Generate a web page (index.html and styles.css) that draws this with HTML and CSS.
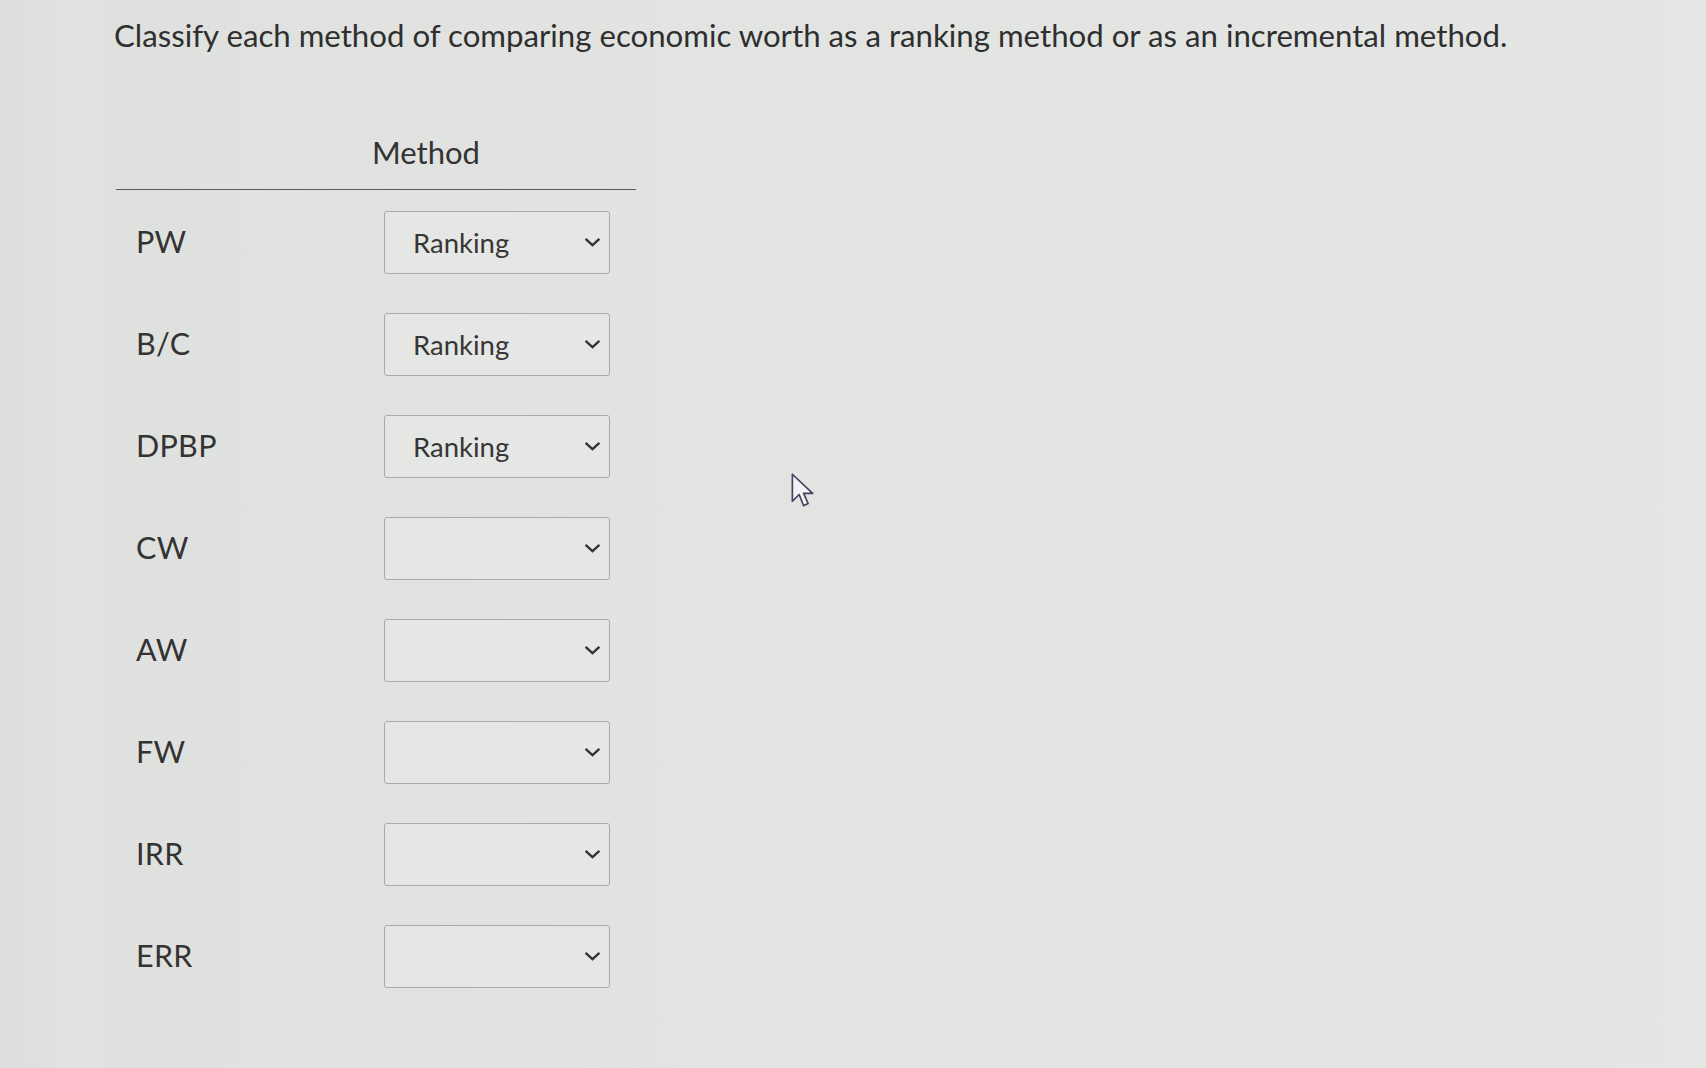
FILE: index.html
```html
<!DOCTYPE html>
<html>
<head>
<meta charset="utf-8">
<link rel="stylesheet" href="styles.css">
</head>
<body>
<div class="page">
  <h1 class="title">Classify each method of comparing economic worth as a ranking method or as an incremental method.</h1>
  <div class="table">
    <div class="head"><span class="head-label">Method</span></div>
    <div class="row"><span class="label">PW</span><div class="sel"><span class="val">Ranking</span><svg class="chev" viewBox="0 0 16 9"><path d="M1.5 1.5 L8 7.5 L14.5 1.5" fill="none" stroke="#333" stroke-width="2.2"/></svg></div></div>
    <div class="row"><span class="label">B/C</span><div class="sel"><span class="val">Ranking</span><svg class="chev" viewBox="0 0 16 9"><path d="M1.5 1.5 L8 7.5 L14.5 1.5" fill="none" stroke="#333" stroke-width="2.2"/></svg></div></div>
    <div class="row"><span class="label">DPBP</span><div class="sel"><span class="val">Ranking</span><svg class="chev" viewBox="0 0 16 9"><path d="M1.5 1.5 L8 7.5 L14.5 1.5" fill="none" stroke="#333" stroke-width="2.2"/></svg></div></div>
    <div class="row"><span class="label">CW</span><div class="sel"><span class="val"></span><svg class="chev" viewBox="0 0 16 9"><path d="M1.5 1.5 L8 7.5 L14.5 1.5" fill="none" stroke="#333" stroke-width="2.2"/></svg></div></div>
    <div class="row"><span class="label">AW</span><div class="sel"><span class="val"></span><svg class="chev" viewBox="0 0 16 9"><path d="M1.5 1.5 L8 7.5 L14.5 1.5" fill="none" stroke="#333" stroke-width="2.2"/></svg></div></div>
    <div class="row"><span class="label">FW</span><div class="sel"><span class="val"></span><svg class="chev" viewBox="0 0 16 9"><path d="M1.5 1.5 L8 7.5 L14.5 1.5" fill="none" stroke="#333" stroke-width="2.2"/></svg></div></div>
    <div class="row"><span class="label">IRR</span><div class="sel"><span class="val"></span><svg class="chev" viewBox="0 0 16 9"><path d="M1.5 1.5 L8 7.5 L14.5 1.5" fill="none" stroke="#333" stroke-width="2.2"/></svg></div></div>
    <div class="row"><span class="label">ERR</span><div class="sel"><span class="val"></span><svg class="chev" viewBox="0 0 16 9"><path d="M1.5 1.5 L8 7.5 L14.5 1.5" fill="none" stroke="#333" stroke-width="2.2"/></svg></div></div>
  </div>
  <svg class="cursor" viewBox="0 0 22 32"><path d="M2 2 L2 26 L8 20 L12 30 L16 28 L12 19 L20 19 Z" fill="#f2f2f4" stroke="#4a4060" stroke-width="1.5" stroke-linejoin="round"/></svg>
</div>
</body>
</html>
```

FILE: styles.css
```css
html, body {
  margin: 0;
  padding: 0;
}
body {
  background: linear-gradient(90deg, #dcdedb 0px, #e2e4e1 90px, #dfe1de 110px, #e2e4e1 700px, #e4e6e3 1706px);
  font-family: Lato, "Open Sans", sans-serif;
  color: #333;
  width: 1706px;
  height: 1068px;
  overflow: hidden;
}
.page {
  position: relative;
  padding: 16px 0 0 114px;
  height: 1052px;
}
.title {
  margin: 0;
  font-weight: 400;
  font-size: 31.2px;
  line-height: 38px;
  color: #2f2f2f;
}
.table {
  width: 520px;
  margin: 80px 0 0 2px;
}
.head {
  height: 56px;
  border-bottom: 1.5px solid #5a5a5a;
  box-sizing: border-box;
  padding-left: 256px;
}
.head-label {
  font-size: 31px;
  line-height: 36px;
  color: #333;
}
.row {
  height: 102px;
  display: flex;
  align-items: center;
}
.label {
  width: 248px;
  padding-left: 20px;
  font-size: 30.5px;
  color: #333;
  letter-spacing: 0.3px;
}
.sel {
  width: 226px;
  height: 63px;
  box-sizing: border-box;
  border: 1.5px solid #a9aaab;
  border-radius: 3px;
  background: #e5e7e4;
  display: flex;
  align-items: center;
  padding: 0 8px 0 28px;
  margin-top: 2px;
}
.val {
  flex: 1;
  font-size: 27.5px;
  color: #363636;
}
.chev {
  width: 17px;
  height: 10px;
}
.cursor {
  position: absolute;
  left: 790px;
  top: 472px;
  width: 25px;
  height: 36px;
}
```
